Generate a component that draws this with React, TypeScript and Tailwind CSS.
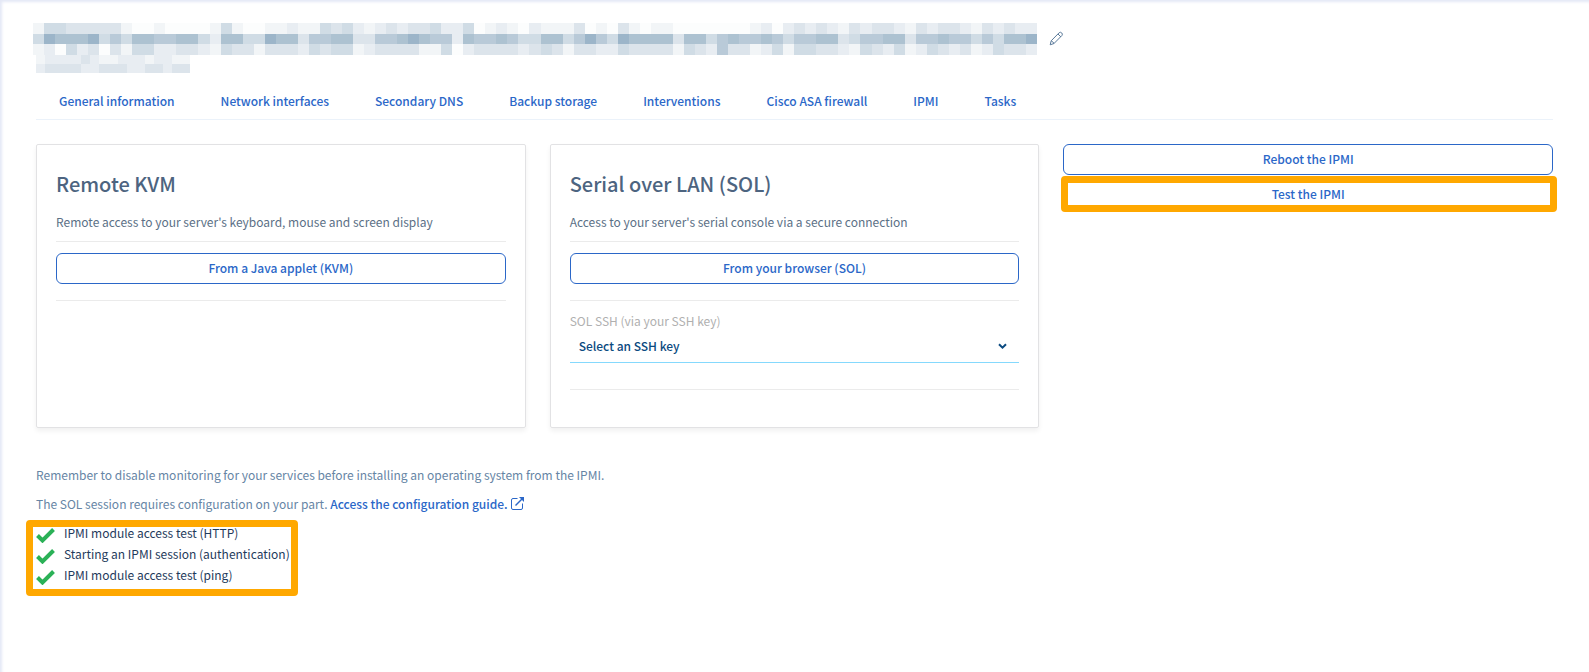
import React from "react";

const FONT = "font-['Noto_Sans_CJK_SC','Noto_Sans',sans-serif]";

// Tints of the redacted title: one string per row, one character per block.
const TINTS: Record<string, string> = {
  "0": "#fcfdfd",
  "1": "#f2f5f7",
  "2": "#e8edf2",
  "3": "#dce4eb",
  "4": "#d0dce5",
  "5": "#b9cad8",
  "6": "#adc2d1",
  "7": "#9cb5c9",
};

const TITLE_ROWS = [
  "1443333310" + "0100001410" + "0112114342" + "1232334224" + "0121021113" + "0103101100" + "0000012023" + "2321323321" + "32332132322",
  "4766674546" + "6556642664" + "4766355663" + "3556765526" + "5565446645" + "7547666636" + "6456556545" + "5663455663" + "55655454667",
  "1204230314" + "4223321433" + "1333243441" + "2333311402" + "3333234313" + "3224333314" + "3253312414" + "4332143241" + "24323124332",
];

const SUBTITLE_ROWS = ["12222321122212211", "23333223332233233"];

function Mosaic({ rows, className }: { rows: string[]; className: string }) {
  return (
    <svg
      className={className}
      viewBox={`0 0 ${rows[0].length} ${rows.length}`}
      preserveAspectRatio="none"
      shapeRendering="crispEdges"
      aria-hidden="true"
    >
      {rows.map((row, y) =>
        row.split("").map((c, x) => (
          <rect key={`${x}-${y}`} x={x} y={y} width={1} height={1} fill={TINTS[c]} />
        )),
      )}
    </svg>
  );
}

const TABS = [
  "General information",
  "Network interfaces",
  "Secondary DNS",
  "Backup storage",
  "Interventions",
  "Cisco ASA firewall",
  "IPMI",
  "Tasks",
];

const CHECKS = [
  "IPMI module access test (HTTP)",
  "Starting an IPMI session (authentication)",
  "IPMI module access test (ping)",
];

function OutlineButton({ children }: { children: React.ReactNode }) {
  return (
    <button
      type="button"
      className="h-[31px] w-full rounded-md border border-[#2b67c8] bg-white pb-0.5 text-xs leading-5 font-medium text-[#2b67c8]"
    >
      {children}
    </button>
  );
}

function Card({ title, text, children }: { title: string; text: string; children: React.ReactNode }) {
  return (
    <section className="min-h-[284px] rounded-xs border border-[#e2e2e4] px-[19px] pt-[23px] shadow-[0_3px_5px_rgba(0,0,0,0.06)]">
      <h2 className="text-xl leading-8 font-medium text-[#4d6480]">{title}</h2>
      <p className="mt-3 text-xs leading-5 text-[#5b7086]">{text}</p>
      <hr className="mt-[9px] mb-[11px] border-[#ebebeb]" />
      {children}
      <hr className="mt-4 border-[#ebebeb]" />
    </section>
  );
}

export default function App() {
  return (
    <main
      className={`${FONT} min-h-screen bg-white px-9 pt-[23px] pb-8 shadow-[inset_2px_2px_3px_#e4e8f6]`}
    >
      <header>
        <div className="flex items-start gap-3">
          <Mosaic rows={TITLE_ROWS} className="-ml-[3px] h-8 w-[1004px]" />
          <button type="button" aria-label="Edit name" className="mt-2">
            <svg width="15" height="15" viewBox="0 0 15 15" fill="none" stroke="#5a7a9a">
              <path d="M1.2 13.8l1-4 8-8.1q1.3-1 2.5.2t.3 2.5l-8 8.1zM2.2 9.8q1.8.8 2.8 2.7M9 3l3 3" />
            </svg>
          </button>
        </div>
        <Mosaic rows={SUBTITLE_ROWS} className="h-[18px] w-[154px]" />
      </header>

      <nav className="mt-[18px] border-b border-[#ebf2fa] px-[23px] pb-2">
        <ul className="flex gap-[46px]">
          {TABS.map((tab) => (
            <li key={tab}>
              <a href="#" className="block text-xs leading-5 font-medium text-[#2b67c8]">
                {tab}
              </a>
            </li>
          ))}
        </ul>
      </nav>

      <div className="mt-6 grid grid-cols-3 gap-6">
        <Card title="Remote KVM" text="Remote access to your server's keyboard, mouse and screen display">
          <OutlineButton>From a Java applet (KVM)</OutlineButton>
        </Card>

        <Card title="Serial over LAN (SOL)" text="Access to your server's serial console via a secure connection">
          <OutlineButton>From your browser (SOL)</OutlineButton>
          <hr className="mt-4 mb-[10px] border-[#ebebeb]" />
          <label htmlFor="ssh-key" className="block text-xs leading-5 text-[#b0b0b0]">
            SOL SSH (via your SSH key)
          </label>
          <div className="relative mb-[26px]">
            <select
              id="ssh-key"
              className="h-8 w-full appearance-none border-b border-[#85d9fd] bg-transparent px-[9px] pb-0.5 text-xs leading-5 font-medium text-[#0b4a80]"
            >
              <option>Select an SSH key</option>
            </select>
            <svg
              className="pointer-events-none absolute top-3 right-3"
              width="9"
              height="7"
              viewBox="0 0 9 7"
              fill="none"
              stroke="#0b4a80"
              strokeWidth="2"
            >
              <path d="M1 1.2l3.500 3.500L8 1.200" />
            </svg>
          </div>
        </Card>

        <div className="flex flex-col gap-1">
          <OutlineButton>Reboot the IPMI</OutlineButton>
          <div className="relative">
            <OutlineButton>Test the IPMI</OutlineButton>
            <div className="pointer-events-none absolute -top-[3px] -right-[4px] -bottom-[2px] -left-[2px] rounded-sm border-[7px] border-[#ffa800]" />
          </div>
        </div>
      </div>

      <p className="mt-[37px] text-xs leading-5 text-[#6685a5]">
        Remember to disable monitoring for your services before installing an operating system from the IPMI.
      </p>
      <p className="mt-[9px] text-xs leading-5 text-[#6685a5]">
        The SOL session requires configuration on your part.{" "}
        <a href="#" className="font-medium text-[#2b67c8]">
          Access the configuration guide.
          <svg
            className="ml-[3px] inline-block align-[-1px]"
            width="13"
            height="13"
            viewBox="0 0 13 13"
            fill="none"
            stroke="currentColor"
          >
            <path d="M6.500 1.500H2Q.5 1.500.5 3v8q0 1.500 1.500 1.500h8q1.500 0 1.500-1.500V6.500" />
            <path d="M4.500 8.500l6.500-6.500" strokeWidth="1.500" />
            <path d="M8 0h5v5z" fill="currentColor" stroke="none" />
          </svg>
        </a>
      </p>

      <div className="relative mt-[9px] w-fit">
        <ul>
          {CHECKS.map((check) => (
            <li key={check} className="flex items-center gap-[9px] pb-px text-xs leading-5 text-[#1f3b5c]">
              <svg width="19" height="16" viewBox="0 0 19 16" className="mt-1">
                <path d="M1.500 8.500l5 5L17.500 2.500" fill="none" stroke="#2bb157" strokeWidth="4" />
              </svg>
              {check}
            </li>
          ))}
        </ul>
        <div className="pointer-events-none absolute -top-[3px] -right-[8px] -bottom-[10px] -left-[10px] rounded-sm border-[7px] border-[#ffa800]" />
      </div>
    </main>
  );
}
